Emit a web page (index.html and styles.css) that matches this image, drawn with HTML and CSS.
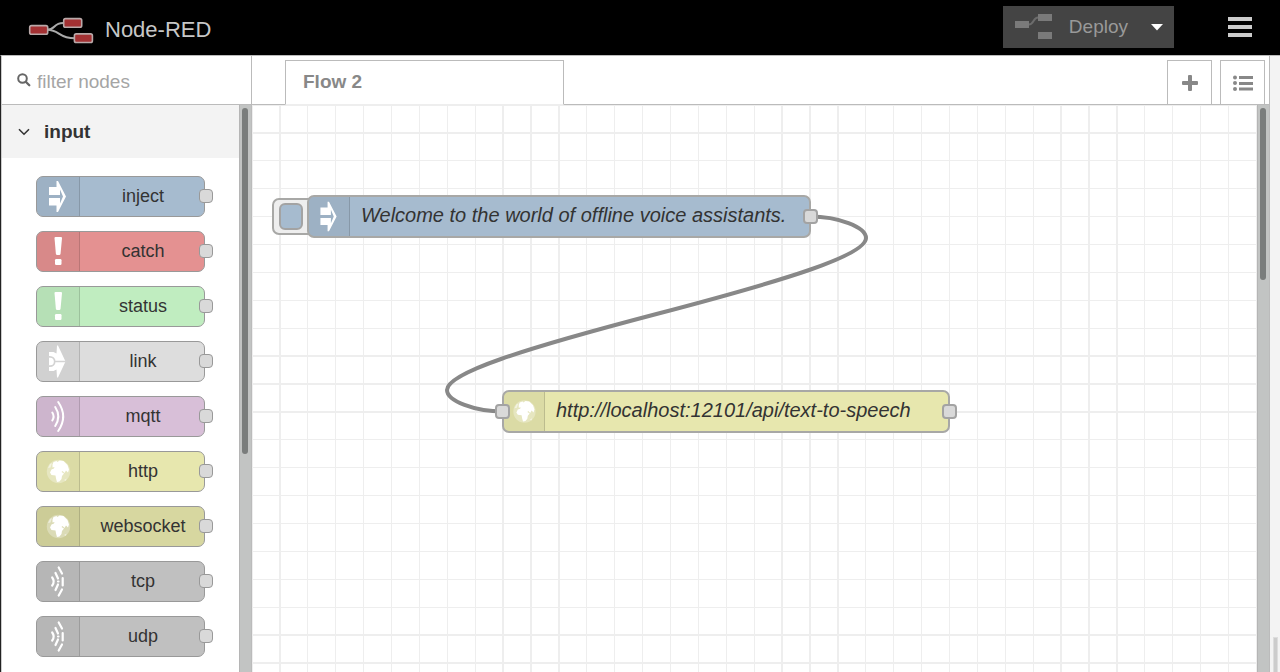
FILE: index.html
```html
<!DOCTYPE html>
<html lang="en">
<head>
<meta charset="utf-8">
<title>Node-RED</title>
<link rel="stylesheet" href="styles.css">
</head>
<body>
<svg class="defs" aria-hidden="true">
  <symbol id="i-arrow" viewBox="1 1 42 39"><path fill="#fff" d="M13 11h7.500V5h1.500L30 20.500 22 36h-1.500v-6.500H13V22h11v5.500l3-7-3-7V19H13z"/></symbol>
  <symbol id="i-alert" viewBox="1 1 42 39"><path fill="#fff" d="M18.500 7q0-1 1-1h5.500q1 0 1 1l-1.500 16q-.2 1-1.200 1h-2.200q-1 0-1.200-1z"/><rect x="19" y="28" width="6.500" height="6" rx="1.200" fill="#fff"/></symbol>
  <symbol id="i-link" viewBox="1 1 42 39"><path fill="#fff" d="M13 11h4.500l3 1.500.5-8h1L29.500 20.500 22 36.500h-1l-.5-8-3 1.500H13z"/><path fill="none" stroke="#d3d3d3" stroke-width="1.700" d="M12 15.800h2a4.700 4.700 0 0 1 0 9.400h-2M18.700 20.500h12"/></symbol>
  <symbol id="i-waves" viewBox="1 1 42 39"><path fill="none" stroke="#fff" stroke-width="2" stroke-linecap="round" d="M16.300 16.500q2.600 4 0 8M19.200 11q6.200 9.500 0 19M22.200 6q10 14.500 0 29"/></symbol>
  <symbol id="i-bridge" viewBox="1 1 42 39"><path fill="none" stroke="#fff" stroke-width="2.200" stroke-linecap="round" d="M16.200 16.500q3 4 0 8M19.500 12l2.500 5.500M22 20.500h.5M22 23.500l-2.500 5.500M22.700 6.500l3.300 6M26.700 17v7.500M26 28.500l-3.300 6"/></symbol>
  <symbol id="i-globe" viewBox="1 1 42 39"><circle cx="22.500" cy="20.500" r="11.700" fill="#fff" opacity=".3"/><path fill="#fff" d="M16.500 13.500l1-2.500 3-1 1 1 2-1.500 4 .5 4 4 1.500 4.500-1 3-2-2-1.500 2.500-2-2-1 1 2.500 1.500-2 2.500-.5 3-2 2.500-2.500.5-1-3.500-.5-3-4-.5-1.500-2.500 1.500-3 2.500-1 .5-1.500-2 .5z"/><path fill="#fff" opacity=".5" d="M12 17l2-4 2-1-1.500 4.500zM28 29l2.500-1.500-.5 2.500z"/></symbol>
</svg>

<header class="header">
  <a class="brand" href="#">
    <svg class="logo" width="66" height="28" viewBox="28 16 66 28" aria-hidden="true">
      <g fill="none" stroke="#aaa" stroke-width="2"><path d="M47 29.800c9 0 6-6.800 16-6.800M47 29.800c13 0 11 8.500 28 8.500"/></g>
      <g fill="#a33133" stroke="#b9a9a9" stroke-width="1.600"><rect x="29.700" y="25.600" width="18" height="8.600" rx="1.800"/><rect x="63.700" y="18.600" width="18" height="8.600" rx="1.800"/><rect x="74.400" y="33.900" width="18" height="8.600" rx="1.800"/></g>
    </svg>
    <span>Node-RED</span>
  </a>
  <div class="actions">
    <button class="deploy">
      <svg width="38" height="26" viewBox="0 0 38 26" aria-hidden="true"><path fill="#7a7a7a" d="M0 7h14v7H0zM23 0h14v7H23zM23 18h14v7H23z"/><path fill="none" stroke="#6c6c6c" stroke-width="2" d="M14 10.500c5 0 4-7 9-7"/></svg>
      <span>Deploy</span>
      <svg class="caret" width="12" height="7" viewBox="0 0 12 7" aria-hidden="true"><path fill="#fff" d="M0 0h12L6 6.500z"/></svg>
    </button>
    <button class="menu" aria-label="Menu">
      <svg width="24" height="20" viewBox="0 0 24 20" aria-hidden="true"><path fill="#ccc" d="M0 0h24v4H0zM0 8h24v4H0zM0 16h24v4H0z"/></svg>
    </button>
  </div>
</header>

<main class="main">
  <aside class="palette">
    <label class="search">
      <svg width="14" height="14" viewBox="0 0 14 14" aria-hidden="true"><circle cx="5.500" cy="5.500" r="4.300" fill="none" stroke="#666" stroke-width="2"/><path stroke="#666" stroke-width="2.300" stroke-linecap="round" d="M9 9l3.300 3.300"/></svg>
      <input type="text" placeholder="filter nodes" aria-label="filter nodes">
    </label>
    <div class="palette-body">
      <div class="palette-list">
        <button class="category">
          <svg width="12" height="8" viewBox="0 0 12 8" aria-hidden="true"><path fill="none" stroke="#333" stroke-width="1.600" d="M1 1.200l5 5 5-5"/></svg>
          input
        </button>
        <div class="nodes">
          <div class="node inject"><svg class="icon"><use href="#i-arrow"/></svg><span class="label">inject</span><i class="port"></i></div>
          <div class="node catch"><svg class="icon"><use href="#i-alert"/></svg><span class="label">catch</span><i class="port"></i></div>
          <div class="node status"><svg class="icon"><use href="#i-alert"/></svg><span class="label">status</span><i class="port"></i></div>
          <div class="node link"><svg class="icon"><use href="#i-link"/></svg><span class="label">link</span><i class="port"></i></div>
          <div class="node mqtt"><svg class="icon"><use href="#i-waves"/></svg><span class="label">mqtt</span><i class="port"></i></div>
          <div class="node http"><svg class="icon"><use href="#i-globe"/></svg><span class="label">http</span><i class="port"></i></div>
          <div class="node websocket"><svg class="icon"><use href="#i-globe"/></svg><span class="label">websocket</span><i class="port"></i></div>
          <div class="node net"><svg class="icon"><use href="#i-bridge"/></svg><span class="label">tcp</span><i class="port"></i></div>
          <div class="node net"><svg class="icon"><use href="#i-bridge"/></svg><span class="label">udp</span><i class="port"></i></div>
        </div>
      </div>
      <div class="scroll"><div class="thumb thumb-palette"></div></div>
    </div>
  </aside>

  <section class="workspace">
    <nav class="tabs">
      <button class="tab">Flow 2</button>
      <span class="spacer"></span>
      <button class="tool" aria-label="Add flow"><svg width="16" height="16" viewBox="0 0 16 16" aria-hidden="true"><path fill="#888" d="M6 1q0-1 1-1h2q1 0 1 1v5h5q1 0 1 1v2q0 1-1 1h-5v5q0 1-1 1H7q-1 0-1-1v-5H1q-1 0-1-1V7q0-1 1-1h5z"/></svg></button>
      <button class="tool" aria-label="List flows"><svg width="20" height="16" viewBox="0 0 20 16" aria-hidden="true"><g fill="#888"><circle cx="2" cy="2.500" r="2"/><circle cx="2" cy="8" r="2"/><circle cx="2" cy="14" r="2"/><path d="M6 1h14v3H6zM6 7h14v3H6zM6 12.500h14v3H6z"/></g></svg></button>
    </nav>
    <div class="chart-row">
      <div class="chart">
        <svg class="grid" aria-hidden="true"><g id="grid" transform="scale(1.395)"></g></svg>
        <svg class="wires" aria-hidden="true"><path d="M558 111.500C586 111.500 614 122 614 133C614 150 538 174 404.500 209C271 244 195 268 195 285C195 296 223 306.500 251 306.500"/></svg>
        <div class="flow-node flow-inject">
          <button class="trigger" aria-label="Inject"></button>
          <div class="node inject big"><svg class="icon"><use href="#i-arrow"/></svg><span class="label">Welcome to the world of offline voice assistants.</span><i class="port"></i></div>
        </div>
        <div class="flow-node flow-http">
          <div class="node http big"><i class="port port-in"></i><svg class="icon"><use href="#i-globe"/></svg><span class="label">http://localhost:12101/api/text-to-speech</span><i class="port"></i></div>
        </div>
      </div>
      <div class="scroll"><div class="thumb thumb-chart"></div></div>
    </div>
  </section>
  <div class="gutter"><div class="grip"></div></div>
</main>
<script src="grid.js"></script>
</body>
</html>
```

FILE: styles.css
```css
*, *::before { box-sizing: border-box; }

body {
  margin: 0;
  height: 100vh;
  display: flex;
  flex-direction: column;
  overflow: hidden;
  background: #fff;
  color: #333;
  font-family: "Liberation Sans", Arial, sans-serif;
}

button {
  margin: 0;
  padding: 0;
  border: 0;
  background: none;
  color: inherit;
  font-family: inherit;
}

svg { display: block; flex: none; }
.defs { position: absolute; width: 0; height: 0; }

.header {
  flex: none;
  height: 55px;
  display: flex;
  justify-content: space-between;
  background: #000;
  padding: 0 28px;
}
.brand {
  display: flex;
  align-items: center;
  gap: 11px;
  padding-top: 5px;
  color: #c7c7c7;
  font-size: 22px;
  text-decoration: none;
}
.actions { display: flex; align-items: center; gap: 54px; padding-bottom: 1px; }
.deploy {
  height: 42px;
  display: flex;
  align-items: center;
  gap: 16px;
  padding: 0 11px 0 12px;
  background: #444;
  color: #999;
  font-size: 19px;
}
.caret { margin-left: 7px; }

.main {
  flex: 1;
  min-height: 0;
  display: flex;
  border-top: 1px solid #bbb;
  border-left: 1px solid #222;
}

.palette {
  flex: none;
  width: 251px;
  display: flex;
  flex-direction: column;
  border-left: 1px solid #ccc;
  border-right: 1px solid #bbb;
}
.search {
  flex: none;
  height: 49px;
  display: flex;
  align-items: center;
  gap: 6px;
  padding: 0 15px;
  border-bottom: 1px solid #bbb;
}
.search input {
  flex: 1;
  min-width: 0;
  padding: 4px 0 0;
  border: 0;
  outline: 0;
  font: 19px "Liberation Sans", Arial, sans-serif;
}
.search input::placeholder { color: #a5a5a5; opacity: 1; }

.palette-body { flex: 1; min-height: 0; display: flex; }
.palette-list { flex: 1; overflow: hidden; }
.category {
  width: 100%;
  height: 53px;
  display: flex;
  align-items: center;
  gap: 14px;
  padding: 0 16px;
  background: #f3f3f3;
  font-size: 19px;
  font-weight: bold;
}
.nodes {
  display: flex;
  flex-direction: column;
  gap: 14px;
  padding: 18px 34px;
}

.node {
  position: relative;
  height: 41px;
  display: flex;
  border: 1px solid #999;
  border-radius: 7px;
  font-size: 18px;
}
.icon {
  width: 43px;
  height: 100%;
  background: rgba(0, 0, 0, 0.05);
  border-right: 1px solid rgba(0, 0, 0, 0.14);
  border-radius: 6px 0 0 6px;
}
.label {
  flex: 1;
  align-self: center;
  padding-left: 2px;
  text-align: center;
  white-space: nowrap;
}
.port {
  position: absolute;
  right: -9px;
  top: 12px;
  width: 14px;
  height: 14px;
  border: 1px solid #999;
  border-radius: 4px;
  background: #d9d9d9;
}
.inject { background: #a6bbcf; }
.catch { background: #e49191; }
.status { background: #c0edc0; }
.link { background: #ddd; }
.mqtt { background: #d8bfd8; }
.http { background: #e7e7ae; }
.websocket { background: #d7d7a0; }
.net { background: silver; }

.scroll {
  flex: none;
  width: 12px;
  padding: 3px 2px;
  background: #c2c4c3;
  border-left: 1px solid #b5b5b5;
}
.thumb { width: 6px; border-radius: 3px; background: #7a7d7c; }
.thumb-palette { height: 346px; }
.thumb-chart { height: 172px; }

.workspace {
  flex: 1;
  min-width: 0;
  display: flex;
  flex-direction: column;
  border-right: 1px solid #bbb;
}
.tabs {
  flex: none;
  height: 49px;
  display: flex;
  gap: 8px;
  padding: 4px 4px 0 33px;
  border-bottom: 1px solid #bbb;
}
.tab {
  width: 279px;
  margin-bottom: -1px;
  padding: 0 17px 2px;
  border: 1px solid #bbb;
  border-bottom-color: #eee;
  background: #fff;
  color: #888;
  font-size: 19px;
  font-weight: bold;
  text-align: left;
}
.spacer { flex: 1; }
.tool {
  width: 45px;
  display: grid;
  place-items: center;
  border: 1px solid #bbb;
  border-bottom: 0;
  background: #fff;
}

.chart-row { flex: 1; min-height: 0; display: flex; }
.chart { position: relative; flex: 1; min-width: 0; overflow: hidden; }
.grid, .wires { position: absolute; inset: 0; width: 100%; height: 100%; }
.grid { stroke: #eee; stroke-width: 1; shape-rendering: crispEdges; }
.wires { fill: none; stroke: #888; stroke-width: 4; }

.flow-node { position: absolute; }
.flow-inject { left: 55px; top: 90px; width: 504px; }
.flow-http { left: 250px; top: 285px; width: 448px; }
.big {
  height: 43px;
  border-width: 2px;
  border-color: #a8a8a6;
  font-size: 20px;
  font-style: italic;
}
.big .icon { width: 41px; border-radius: 5px 0 0 5px; }
.big .label { text-align: left; padding-left: 11px; padding-bottom: 2px; }
.big .port { width: 15px; height: 15px; right: -9px; border-width: 2px; border-color: #a3a3a3; }
.big .port-in { left: -9px; right: auto; }
.trigger {
  position: absolute;
  left: -35px;
  top: 3px;
  width: 44px;
  height: 37px;
  border: 2px solid #a8a8a6;
  border-radius: 7px;
  background: #eee;
}
.trigger::before {
  content: "";
  display: block;
  width: 24px;
  height: 27px;
  margin-left: 5px;
  border: 2px solid #a3a3a3;
  border-radius: 6px;
  background: #a6bbcf;
}

.gutter {
  flex: none;
  width: 10px;
  display: flex;
  align-items: flex-end;
  justify-content: center;
  background: #f3f3f3;
}
.grip { width: 5px; height: 35px; border: 1px solid #ddd; border-bottom: 0; background: #ccc; }
```

FILE: grid.js
```js
const grid = document.getElementById("grid");
const STEP = 20;
const EXTENT = 4000;
let d = "";
for (let p = 0; p <= EXTENT; p += STEP) {
  d += `M${p} 0V${EXTENT}M0 ${p}H${EXTENT}`;
}
const path = document.createElementNS("http://www.w3.org/2000/svg", "path");
path.setAttribute("d", d);
grid.appendChild(path);
```
